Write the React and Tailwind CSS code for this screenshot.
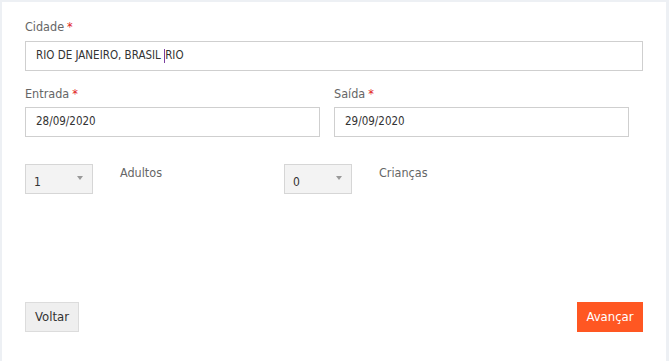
const font = { fontFamily: '"Liberation Sans Narrow", "DejaVu Sans Condensed", "Roboto", sans-serif' };

function Label({ children }) {
  return (
    <div className="text-[12.5px] leading-[16px] text-[#666]">
      {children}
      <span className="text-[#e02020] ml-[3px]">*</span>
    </div>
  );
}

function Field({ children, className }) {
  return (
    <div className={"h-[30px] border border-[#cfcfcf] bg-white flex items-center px-[10px] text-[11.5px] text-[#333] whitespace-pre " + className}>
      {children}
    </div>
  );
}

function Select({ value }) {
  return (
    <div className="relative w-[68px] h-[30px] border border-[#d6d6d6] bg-[#f3f3f3] text-[12px] text-[#333] pl-[8px] pt-[10px] leading-[14px]">
      {value}
      <span className="absolute right-[9px] top-[11px] w-0 h-0 border-l-[3px] border-r-[3px] border-t-[4px] border-l-transparent border-r-transparent border-t-[#999]" />
    </div>
  );
}

export default function App() {
  return (
    <div className="w-[669px] h-[361px] bg-[#edf0f4] pt-[2px] pl-[2px] pr-[3px]" style={font}>
      <div className="h-full bg-white px-[23px] pt-[17px] flex flex-col">
        <Label>Cidade</Label>
        <Field className="mt-[6px] w-full">
          <span>RIO DE JANEIRO, BRASIL </span>
          <span className="inline-block w-[1px] h-[14px] bg-[#7b3fa0]" />
          <span>RIO</span>
        </Field>

        <div className="flex gap-[14px] mt-[15px]">
          <div className="w-[295px]">
            <Label>Entrada</Label>
            <Field className="mt-[5px]">28/09/2020</Field>
          </div>
          <div className="w-[295px]">
            <Label>Saída</Label>
            <Field className="mt-[5px]">29/09/2020</Field>
          </div>
        </div>

        <div className="flex mt-[27px]">
          <div className="w-[259px] flex items-start">
            <Select value="1" />
            <span className="ml-[27px] mt-[1px] text-[12.5px] leading-[16px] text-[#666]">Adultos</span>
          </div>
          <div className="flex items-start">
            <Select value="0" />
            <span className="ml-[27px] mt-[1px] text-[12.5px] leading-[16px] text-[#666]">Crianças</span>
          </div>
        </div>

        <div className="flex justify-between mt-auto mb-[29px]">
          <button className="h-[30px] w-[54px] bg-[#efefef] border border-[#dcdcdc] text-[13px] text-[#333]">Voltar</button>
          <button className="h-[30px] w-[66px] bg-[#ff5722] text-[13px] font-medium text-white">Avançar</button>
        </div>
      </div>
    </div>
  );
}
